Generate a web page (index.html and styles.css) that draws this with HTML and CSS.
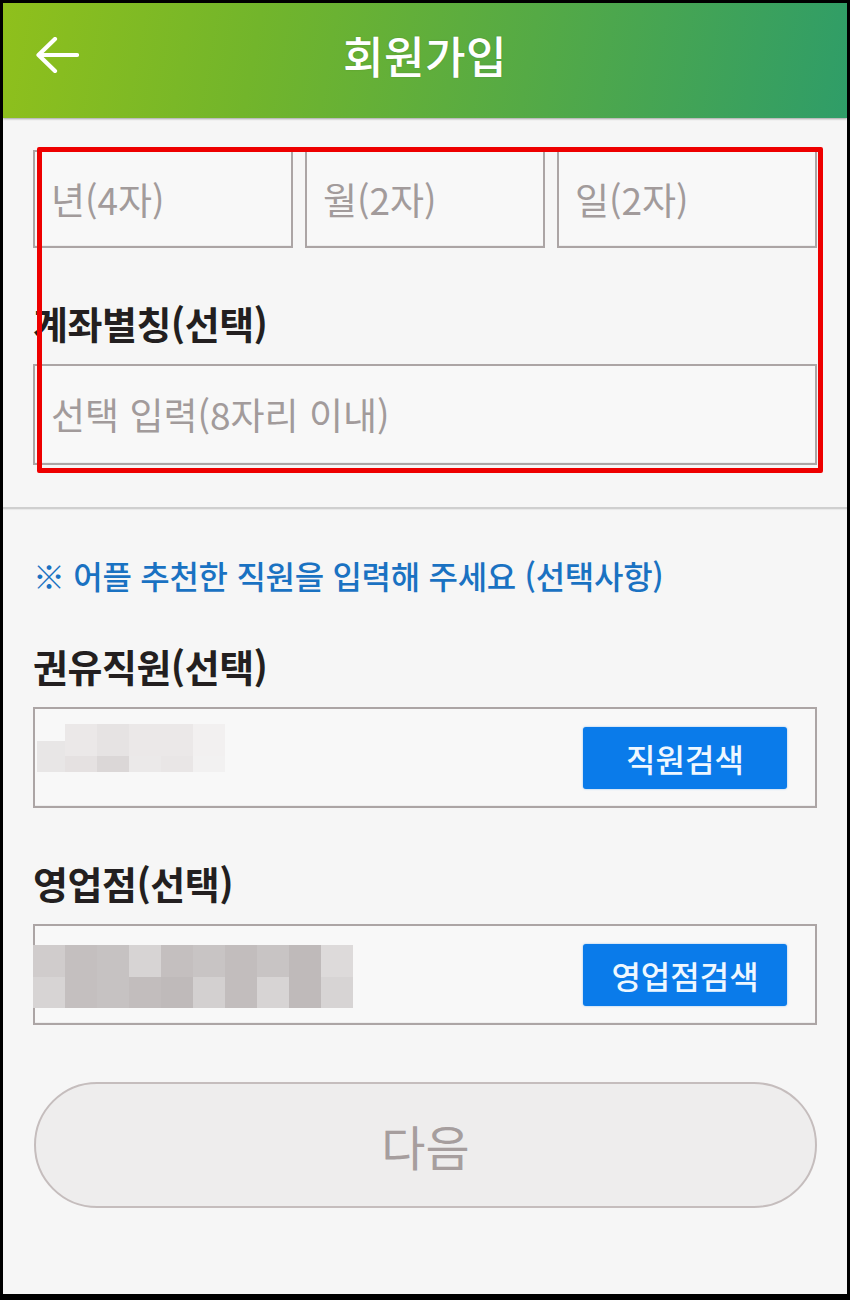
FILE: index.html
```html
<!DOCTYPE html>
<html lang="ko">
<head>
<meta charset="utf-8">
<title>회원가입</title>
<link rel="stylesheet" href="styles.css">
</head>
<body>
<div class="screen">
  <header class="appbar">
    <div class="appbar-left">
      <svg class="back" viewBox="0 0 44 36" width="44" height="36" aria-hidden="true">
        <path d="M42 18H4M20 2L3.5 18L20 34" fill="none" stroke="#ffffff" stroke-width="4.2" stroke-linecap="round" stroke-linejoin="round"/>
      </svg>
    </div>
    <h1 class="title">회원가입</h1>
    <div class="appbar-right"></div>
  </header>

  <main class="content">
    <section class="section-top">
      <div class="date-row">
        <div class="field date"><span class="ph">년(4자)</span></div>
        <div class="field date"><span class="ph">월(2자)</span></div>
        <div class="field date"><span class="ph">일(2자)</span></div>
      </div>
      <div class="label">계좌별칭(선택)</div>
      <div class="field wide"><span class="ph">선택 입력(8자리 이내)</span></div>
      <div class="highlight"></div>
    </section>

    <hr class="divider">

    <section class="section-bottom">
      <p class="notice">※ 어플 추천한 직원을 입력해 주세요 (선택사항)</p>

      <div class="label">권유직원(선택)</div>
      <div class="field wide search">
        <div class="mosaic mosaic-a">
          <i class="c1 b1"></i>
          <i class="t a1"></i><i class="t a2"></i><i class="t a1"></i><i class="t a1"></i><i class="t a3"></i>
          <i class="u b2"></i><i class="u b3"></i><i class="u b4"></i><i class="u b5"></i><i class="u b6"></i>
        </div>
        <button class="btn-search" type="button">직원검색</button>
      </div>

      <div class="label">영업점(선택)</div>
      <div class="field wide search">
        <div class="mosaic mosaic-b">
          <i class="g4"></i><i class="g7"></i><i class="g6"></i><i class="g2"></i><i class="g7"></i><i class="g5"></i><i class="g8"></i><i class="g5"></i><i class="g9"></i><i class="g1"></i>
          <i class="g2"></i><i class="g7"></i><i class="g6"></i><i class="g8"></i><i class="g9"></i><i class="g3"></i><i class="g8"></i><i class="g2"></i><i class="g9"></i><i class="g2"></i>
        </div>
        <button class="btn-search" type="button">영업점검색</button>
      </div>

      <button class="btn-next" type="button">다음</button>
    </section>
  </main>
</div>
</body>
</html>
```

FILE: styles.css
```css
* { box-sizing: border-box; }

html, body {
  margin: 0;
  padding: 0;
  background: #000;
}

body {
  font-family: "Noto Sans CJK KR", "Noto Sans", sans-serif;
}

.screen {
  width: 850px;
  height: 1300px;
  border-style: solid;
  border-color: #000;
  border-width: 3px 3px 6px 3px;
  background: #f6f6f6;
  overflow: hidden;
  display: flex;
  flex-direction: column;
}

/* ---------- app bar ---------- */
.appbar {
  height: 115px;
  flex: none;
  display: grid;
  grid-template-columns: 1fr auto 1fr;
  align-items: center;
  padding: 0 32px 12px 32px;
  background: linear-gradient(100deg, #8fc01c 0%, #72b52b 30%, #55aa45 62%, #2f9d68 100%);
  box-shadow: 0 1px 2px rgba(0, 0, 0, 0.35);
  position: relative;
  z-index: 1;
}

.appbar-left {
  display: flex;
  align-items: center;
}

.back {
  display: block;
}

.title {
  margin: 0;
  color: #ffffff;
  font-size: 44px;
  font-weight: 500;
  letter-spacing: 0.5px;
  line-height: 60px;
  text-shadow: 0 0 2px rgba(0, 0, 0, 0.15);
}

/* ---------- content ---------- */
.content {
  flex: 1;
  display: flex;
  flex-direction: column;
}

.section-top {
  position: relative;
  padding: 32px 30px 0 30px;
}

.section-bottom {
  padding: 0 30px;
  display: flex;
  flex-direction: column;
}

.date-row {
  display: grid;
  grid-template-columns: 260px 240px 260px;
  column-gap: 12px;
}

.field {
  border: 2px solid #aca5a5;
  background: #f8f8f8;
  display: flex;
  align-items: center;
  box-shadow: inset 0 -1px 0 rgba(0, 0, 0, 0.04);
}

.field.date {
  height: 98px;
  padding-left: 16px;
}

.field.wide {
  height: 101px;
  padding-left: 16px;
}

.ph {
  color: #a29b9b;
  font-size: 37px;
  font-weight: 400;
  line-height: 1;
}

.label {
  margin-top: 52px;
  margin-bottom: 18px;
  color: #231f20;
  font-size: 38px;
  font-weight: 700;
  line-height: 46px;
  letter-spacing: -0.5px;
}

.highlight {
  position: absolute;
  left: 34px;
  top: 29px;
  width: 786px;
  height: 326px;
  border: 5px solid #ee0000;
  border-radius: 2px;
  pointer-events: none;
}

.divider {
  margin: 42px 0 0 0;
  border: 0;
  height: 2px;
  background: #cfcfcf;
  box-shadow: 0 1px 1px rgba(0, 0, 0, 0.06);
}

.notice {
  margin: 46px 0 0 0;
  color: #1a72c2;
  font-size: 32px;
  font-weight: 500;
  line-height: 40px;
  letter-spacing: -0.3px;
}

.notice + .label {
  margin-top: 48px;
}

/* ---------- search fields ---------- */
.field.search {
  padding: 0 28px 0 0;
  justify-content: space-between;
  align-items: flex-start;
}

.mosaic {
  display: grid;
}

.mosaic i {
  display: block;
}

.mosaic-a {
  margin-top: 15px;
  margin-left: 2px;
  grid-template-columns: 28px repeat(5, 32px);
  grid-template-rows: 17px 15px 16px;
}

.mosaic-a .c1 { grid-column: 1; grid-row: 2 / 4; }
.mosaic-a .t { grid-row: 1 / 3; }
.mosaic-a .u { grid-row: 3; }

.a1 { background: #ebe8e8; }
.a2 { background: #e6e3e3; }
.a3 { background: #f2f0f0; }
.b1 { background: #e8e6e6; }
.b2 { background: #e5e1e1; }
.b3 { background: #dbd7d7; }
.b4 { background: #ebe9e9; }
.b5 { background: #e9e6e6; }
.b6 { background: #f2f1f1; }

.mosaic-b {
  margin-top: 19px;
  margin-left: -2px;
  grid-template-columns: repeat(10, 32px);
  grid-template-rows: 32px 31px;
}

.g1 { background: #dddada; }
.g2 { background: #d7d4d4; }
.g3 { background: #d3d0d0; }
.g4 { background: #d0cccc; }
.g5 { background: #c8c4c4; }
.g6 { background: #c6c2c2; }
.g7 { background: #c4bfbf; }
.g8 { background: #c2bdbd; }
.g9 { background: #bfbaba; }

.btn-search {
  align-self: center;
  width: 204px;
  height: 62px;
  border: 0;
  border-radius: 3px;
  background: #0a7bea;
  color: #eef7ff;
  font-family: "Noto Sans CJK KR", "Noto Sans", sans-serif;
  font-size: 32px;
  font-weight: 500;
  line-height: 1;
  padding: 0;
  box-shadow: 0 0 2px rgba(10, 123, 234, 0.5);
}

/* ---------- next button ---------- */
.btn-next {
  margin-top: 57px;
  margin-left: 1px;
  width: 783px;
  height: 126px;
  border: 2px solid #c5bdbd;
  border-radius: 63px;
  background: #eeeded;
  color: #a69e9e;
  font-family: "Noto Sans CJK KR", "Noto Sans", sans-serif;
  font-size: 48px;
  font-weight: 400;
  line-height: 1;
  padding: 0;
}
```
